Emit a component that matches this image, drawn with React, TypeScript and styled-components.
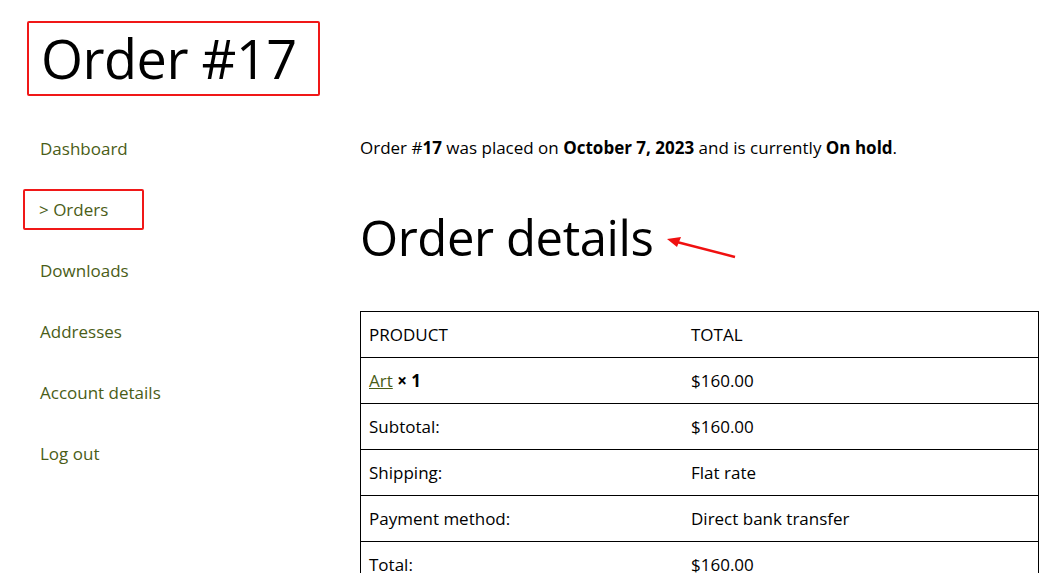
import React from 'react';
import styled, { createGlobalStyle } from 'styled-components';

const GlobalStyle = createGlobalStyle`
  html, body {
    margin: 0;
    padding: 0;
    background: #fff;
  }
  body {
    font-family: 'Open Sans', 'Noto Sans', sans-serif;
    color: #000;
  }
`;

const navItems = ['Dashboard', 'Orders', 'Downloads', 'Addresses', 'Account details', 'Log out'];

const rows: { label: React.ReactNode; value: string }[] = [
  { label: 'Subtotal:', value: '$160.00' },
  { label: 'Shipping:', value: 'Flat rate' },
  { label: 'Payment method:', value: 'Direct bank transfer' },
  { label: 'Total:', value: '$160.00' },
];

const App = () => (
  <>
    <GlobalStyle />
    <Page>
      <TitleBox>
        <Title>Order #17</Title>
      </TitleBox>
      <Body>
        <Nav>
          {navItems.map((item) => (
            <NavItem key={item} $active={item === 'Orders'}>
              <NavLink href="#">{item === 'Orders' ? `> ${item}` : item}</NavLink>
            </NavItem>
          ))}
        </Nav>
        <Content>
          <Intro>
            Order #<b>17</b> was placed on <b>October 7, 2023</b> and is currently <b>On hold</b>.
          </Intro>
          <Heading>
            Order details
            <Arrow width="72" height="24" viewBox="0 0 72 24">
              <line x1="8" y1="5" x2="70" y2="21" stroke="#f01010" strokeWidth="2.4" />
              <polygon points="2,3 16,1 12,11" fill="#f01010" />
            </Arrow>
          </Heading>
          <Table>
            <thead>
              <tr>
                <HeadCell>Product</HeadCell>
                <HeadCell>Total</HeadCell>
              </tr>
            </thead>
            <tbody>
              <tr>
                <Cell>
                  <ItemLink href="#">Art</ItemLink> <b>× 1</b>
                </Cell>
                <Cell>$160.00</Cell>
              </tr>
              {rows.map((r, i) => (
                <tr key={i}>
                  <Cell>{r.label}</Cell>
                  <Cell>{r.value}</Cell>
                </tr>
              ))}
            </tbody>
          </Table>
        </Content>
      </Body>
    </Page>
  </>
);

const Page = styled.div`
  padding: 21px 16px 0 27px;
`;

const TitleBox = styled.div`
  display: inline-block;
  border: 2px solid #f01818;
  border-radius: 2px;
  padding: 0 21px 0 12px;
  height: 71px;
  box-sizing: content-box;
`;

const Title = styled.h1`
  margin: 0;
  font-weight: 400;
  font-size: 54px;
  line-height: 71px;
  letter-spacing: -0.5px;
`;

const Body = styled.div`
  display: grid;
  grid-template-columns: 333px 1fr;
  margin-top: 32px;
`;

const Nav = styled.ul`
  list-style: none;
  margin: 0;
  padding: 0;
`;

const NavItem = styled.li<{ $active?: boolean }>`
  height: 61px;
  display: flex;
  align-items: flex-start;
  & > a {
    display: inline-block;
    padding: 8px 34px 8px ${(p) => (p.$active ? '14px' : '11px')};
    margin-left: ${(p) => (p.$active ? '-4px' : '0')};
    border: 2px solid ${(p) => (p.$active ? '#f01818' : 'transparent')};
    border-radius: 2px;
  }
`;

const NavLink = styled.a`
  color: #4a5d17;
  text-decoration: none;
  font-size: 17px;
  line-height: 21px;
`;

const Content = styled.div`
  padding-top: 9px;
`;

const Intro = styled.p`
  margin: 0;
  font-size: 17px;
  line-height: 21px;
  b {
    font-weight: 700;
  }
`;

const Heading = styled.h2`
  margin: 48px 0 0;
  font-weight: 400;
  font-size: 49px;
  line-height: 62px;
  letter-spacing: -0.4px;
  display: flex;
  align-items: center;
`;

const Arrow = styled.svg`
  margin-left: 12px;
  margin-top: 22px;
`;

const Table = styled.table`
  margin-top: 43px;
  width: 679px;
  border-collapse: collapse;
  border: 1px solid #000;
  font-size: 17px;
  table-layout: fixed;
  td:first-child,
  th:first-child {
    width: 306px;
  }
`;

const HeadCell = styled.th`
  text-align: left;
  font-weight: 400;
  text-transform: uppercase;
  padding: 0 8px;
  height: 45px;
  border-bottom: 1px solid #000;
`;

const Cell = styled.td`
  padding: 0 8px;
  height: 45px;
  border-bottom: 1px solid #000;
`;

const ItemLink = styled.a`
  color: #4a5d17;
  text-decoration: underline;
`;

export default App;
